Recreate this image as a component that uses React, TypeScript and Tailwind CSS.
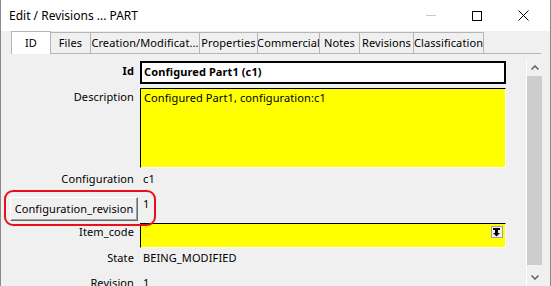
import React from "react";

const tabs = [
  { label: "ID", w: 39 },
  { label: "Files", w: 40 },
  { label: "Creation/Modificat...", w: 109 },
  { label: "Properties", w: 58 },
  { label: "Commercial", w: 62 },
  { label: "Notes", w: 40 },
  { label: "Revisions", w: 54 },
  { label: "Classification", w: 70 },
];

function Label({ children, bold }: { children: React.ReactNode; bold?: boolean }) {
  return (
    <div className={`w-[133px] shrink-0 text-right leading-[16px] ${bold ? "font-bold" : ""}`}>
      {children}
    </div>
  );
}

function DropIcon() {
  return (
    <div className="flex h-[12px] w-[12px] items-center justify-center border border-[#a0a0a0] bg-[#f0f0f0]">
      <svg width="8" height="9" viewBox="0 0 8 9">
        <rect x="0" y="0" width="7" height="2" fill="#000" />
        <rect x="2" y="2" width="3" height="3" fill="#000" />
        <path d="M0 5 H7 L3.5 8.5 Z" fill="#000" />
      </svg>
    </div>
  );
}

export default function App() {
  return (
    <div
      className="relative h-[286px] w-[551px] overflow-hidden border-l border-r border-[#8a8a8a] bg-[#f0f0f0] text-[11px] tracking-[0.1px] text-black"
      style={{ fontFamily: '"Noto Sans", "Open Sans", sans-serif' }}
    >
      {/* title bar */}
      <div className="flex h-[31px] items-center bg-white pl-[8px] text-[12px] tracking-normal">
        <span className="flex-1">Edit / Revisions ... PART</span>
        <div className="flex h-full items-center">
          <div className="flex w-[46px] justify-center">
            <div className="h-px w-[10px] bg-[#c8c8c8]" />
          </div>
          <div className="flex w-[46px] justify-center">
            <div className="h-[10px] w-[10px] border border-black" />
          </div>
          <div className="flex w-[46px] justify-center">
            <svg width="11" height="11" viewBox="0 0 11 11">
              <path d="M0.5 0.5 L10.5 10.5 M10.5 0.5 L0.5 10.5" stroke="#000" strokeWidth="1" />
            </svg>
          </div>
          <div className="w-[4px]" />
        </div>
      </div>

      {/* tabs */}
      <div className="ml-[10px] mr-[9px] flex h-[23px] items-end border-b border-[#b5b5b5] whitespace-nowrap">
        {tabs.map((t, i) =>
          i === 0 ? (
            <div
              key={t.label}
              className="-mb-px flex h-[23px] shrink-0 items-center justify-center border border-b-0 border-[#b5b5b5] bg-white"
              style={{ width: t.w + 1 }}
            >
              {t.label}
            </div>
          ) : (
            <div
              key={t.label}
              className="flex h-[21px] shrink-0 items-center justify-center overflow-hidden border-r border-t border-[#b5b5b5] bg-[#f0f0f0]"
              style={{ width: t.w }}
            >
              {t.label}
            </div>
          )
        )}
      </div>

      {/* body */}
      <div className="flex">
        <div className="flex-1">
          {/* Id */}
          <div className="mt-[7px] flex">
            <Label bold>
              <div className="pt-[2px]">Id</div>
            </Label>
            <div className="ml-[6px] flex h-[23px] w-[366px] items-center border-2 border-black bg-white pl-[2px] font-bold">
              Configured Part1 (c1)
            </div>
          </div>

          {/* Description */}
          <div className="mt-[4px] flex">
            <Label>
              <div className="pt-[1px]">Description</div>
            </Label>
            <div className="ml-[6px] h-[80px] w-[366px] border border-b-white border-l-black border-r-white border-t-black bg-[#ffff00] pl-[3px] pt-px leading-[16px]">
              Configured Part1, configuration:c1
            </div>
          </div>

          {/* Configuration */}
          <div className="mt-[3px] flex h-[16px]">
            <Label>Configuration</Label>
            <div className="ml-[9px] leading-[16px]">c1</div>
          </div>

          {/* Configuration_revision */}
          <div className="mt-[10px] flex h-[24px]">
            <div className="ml-[9px] flex h-[24px] w-[128px] items-center justify-center border border-b-[#6a6a6a] border-l-white border-r-[#6a6a6a] border-t-white bg-[#f0f0f0] shadow-[inset_-1px_-1px_0_#a0a0a0]">
              Configuration_revision
            </div>
            <div className="ml-[5px] -mt-px leading-[16px]">1</div>
          </div>

          {/* Item_code */}
          <div className="mt-[2px] flex">
            <Label>
              <div className="pt-px">Item_code</div>
            </Label>
            <div className="ml-[6px] flex h-[25px] w-[366px] justify-end border border-b-white border-l-black border-r-white border-t-black bg-[#ffff00] pr-[2px] pt-[2px]">
              <DropIcon />
            </div>
          </div>

          {/* State */}
          <div className="mt-[2px] flex h-[16px]">
            <Label>State</Label>
            <div className="ml-[9px] leading-[16px]">BEING_MODIFIED</div>
          </div>

          {/* Revision */}
          <div className="mt-[9px] flex h-[16px]">
            <Label>Revision</Label>
            <div className="ml-[9px] leading-[16px]">1</div>
          </div>
        </div>

        {/* scrollbar */}
        <div className="mr-[8px] mt-[5px] flex h-[230px] w-[16px] flex-col border-l border-white">
          <div className="flex h-[17px] items-center justify-center">
            <svg width="8" height="5" viewBox="0 0 8 5">
              <path d="M0.5 4.5 L4 1 L7.5 4.5" fill="none" stroke="#606060" strokeWidth="1.5" />
            </svg>
          </div>
          <div className="h-[189px] bg-[#cdcdcd]" />
          <div className="flex flex-1 items-center justify-center">
            <svg width="8" height="5" viewBox="0 0 8 5">
              <path d="M0.5 0.5 L4 4 L7.5 0.5" fill="none" stroke="#606060" strokeWidth="1.5" />
            </svg>
          </div>
        </div>
      </div>

      {/* red highlight around the button */}
      <div className="pointer-events-none absolute left-[3px] top-[190px] h-[36px] w-[152px] rounded-[9px] border-[2.5px] border-[#e8101a]" />
    </div>
  );
}
